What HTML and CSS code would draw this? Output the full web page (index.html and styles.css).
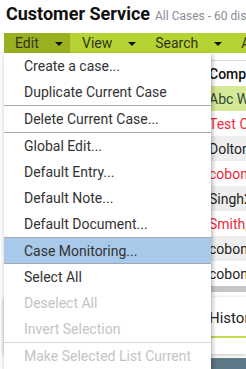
FILE: index.html
```html
<!DOCTYPE html>
<html>
<head>
    <link rel="stylesheet" href="styles.css">
</head>
<body>
    <div class="page">
        <div class="title-row">
            <h1>Customer Service</h1>
            <span class="subtitle">All Cases - 60 displayed</span>
        </div>

        <nav class="menubar">
            <div class="menu-item active">Edit<span class="caret"></span>
                <ul class="dropdown">
                    <li>Create a case...</li>
                    <li>Duplicate Current Case</li>
                    <li class="sep"></li>
                    <li>Delete Current Case...</li>
                    <li class="sep"></li>
                    <li>Global Edit...</li>
                    <li>Default Entry...</li>
                    <li>Default Note...</li>
                    <li>Default Document...</li>
                    <li class="sep"></li>
                    <li class="hover">Case Monitoring...</li>
                    <li>Select All</li>
                    <li class="disabled">Deselect All</li>
                    <li class="disabled">Invert Selection</li>
                    <li class="sep light"></li>
                    <li class="disabled">Make Selected List Current</li>
                </ul>
            </div>
            <div class="menu-item">View<span class="caret"></span></div>
            <div class="menu-item">Search<span class="caret"></span></div>
            <div class="menu-item">Actions<span class="caret"></span></div>
        </nav>

        <div class="content">
            <table class="cases">
                <tr class="head"><td class="sel"></td><td>Company</td></tr>
                <tr class="current"><td class="sel"></td><td>Abc Widgets</td></tr>
                <tr class="urgent"><td class="sel"></td><td>Test Company</td></tr>
                <tr class="alt"><td class="sel"></td><td>Dolton, Inc.</td></tr>
                <tr class="urgent"><td class="sel"></td><td>cobonet</td></tr>
                <tr class="alt"><td class="sel"></td><td>Singh2</td></tr>
                <tr class="urgent"><td class="sel"></td><td>Smith, John</td></tr>
                <tr class="alt"><td class="sel"></td><td>cobonet</td></tr>
                <tr><td class="sel"></td><td>cobonet</td></tr>
            </table>
            <div class="hscroll"></div>

            <div class="tabs-panel">
                <div class="tab">History</div>
            </div>
            <div class="footer-bar"></div>
        </div>
    </div>
</body>
</html>
```

FILE: styles.css
```css
html, body {
    margin: 0;
    padding: 0;
    overflow: hidden;
    background-color: #fff;
}
body {
    font-family: Roboto, "Liberation Sans", sans-serif;
    color: #333;
    width: 246px;
    height: 369px;
}
.page {
    width: 246px;
    overflow: hidden;
}
.title-row {
    display: flex;
    align-items: baseline;
    height: 33px;
    padding: 0 6px;
    box-sizing: border-box;
    white-space: nowrap;
    overflow: hidden;
}
.title-row h1 {
    margin: 0;
    font-size: 18px;
    line-height: 28px;
    font-weight: bold;
    color: #111;
}
.subtitle {
    margin-left: 5px;
    font-size: 12px;
    color: #8c8c98;
}
.menubar {
    display: flex;
    height: 20px;
    margin-left: 4px;
    background-color: #b6d334;
    white-space: nowrap;
}
.menu-item {
    position: relative;
    flex-shrink: 0;
    display: flex;
    align-items: center;
    padding: 0 7px 0 12px;
    font-size: 14px;
    color: #33331a;
}
.menu-item.active {
    padding-left: 11px;
    background-color: #9bb021;
    width: 48px;
}
.caret {
    margin-left: auto;
    width: 0;
    height: 0;
    border-left: 4px solid transparent;
    border-right: 4px solid transparent;
    border-top: 4px solid #111;
    margin-top: 2px;
}
.menu-item + .menu-item .caret {
    margin-left: 16px;
}
.dropdown {
    position: absolute;
    top: 100%;
    left: 0;
    z-index: 10;
    width: 207px;
    margin: 0;
    padding: 0;
    list-style: none;
    background-color: #fff;
    box-shadow: 1px 2px 5px rgba(0,0,0,0.35);
}
.dropdown li {
    height: 26px;
    line-height: 26px;
    padding-left: 20px;
    font-size: 14px;
    color: #333;
}
.dropdown li.sep {
    height: 1px;
    padding: 0;
    background-color: #aaa;
}
.dropdown li.sep.light {
    background-color: #d8d8d8;
}
.dropdown li.hover {
    background-color: #a8c9ea;
    box-shadow: inset 0 -1px 0 #9aaabb;
}
.dropdown li.disabled {
    color: #c4c4c4;
}
.content {
    margin-left: 4px;
}
.cases {
    margin-top: 7px;
    border-collapse: collapse;
    width: 420px;
    font-size: 14px;
    border-top: 1px solid #ddd;
}
.cases td {
    height: 25px;
    padding: 0 0 0 4px;
    white-space: nowrap;
    color: #222;
}
.cases td.sel {
    width: 197px;
}
.cases tr.head td {
    font-weight: 500;
    color: #111;
}
.cases tr.current {
    background-color: #d5e895;
}
.cases tr.current td {
    color: #2f4a3c;
}
.cases tr.urgent td {
    color: #f02a3c;
}
.cases tr.alt {
    background-color: #eee;
}
.hscroll {
    height: 6px;
    background-color: #c6c6c6;
}
.tabs-panel {
    margin: 5px 0 4px;
    height: 57px;
    padding-top: 11px;
    padding-left: 4px;
    box-sizing: border-box;
    background-color: #fff;
    box-shadow: 0 1px 4px rgba(0,0,0,0.25);
}
.tab {
    margin-left: 201px;
    padding-bottom: 8px;
    line-height: 20px;
    font-size: 15px;
    color: #222;
    border-bottom: 2px solid #c9da4e;
    white-space: nowrap;
}
.footer-bar {
    height: 20px;
    background-color: #5d7886;
}
```
